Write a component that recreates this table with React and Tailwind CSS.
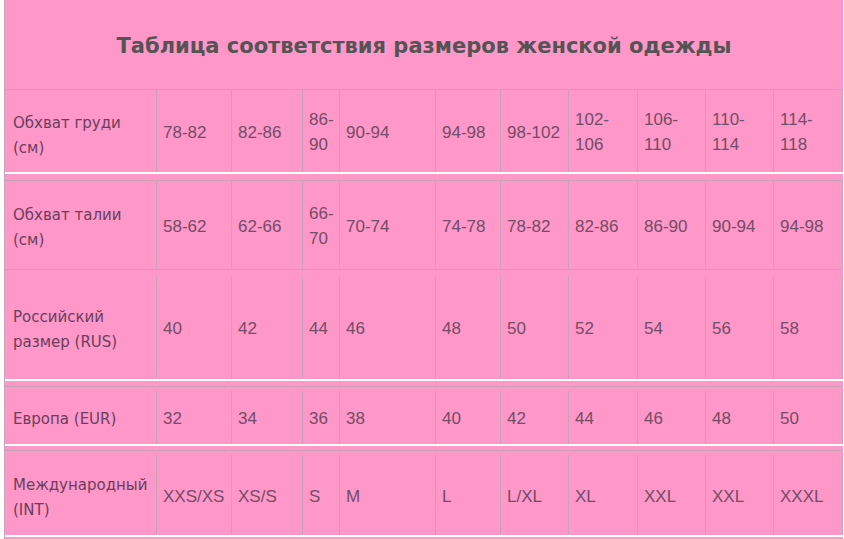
const COLS = 'grid-cols-[152px_75px_71px_37px_96px_65px_68px_69px_68px_68px_69px]'

const ROWS = [
  {
    label: ['Обхват груди', '(см)'],
    values: ['78-82', '82-86', '86-\n90', '90-94', '94-98', '98-102', '102-\n106', '106-\n110', '110-\n114', '114-\n118'],
    cls: 'h-[84px] border-b-2 border-white',
    labelPad: 'pt-[10px]',
  },
  {
    label: ['Обхват талии', '(см)'],
    values: ['58-62', '62-66', '66-\n70', '70-74', '74-78', '78-82', '82-86', '86-90', '90-94', '94-98'],
    cls: 'mt-[6px] h-[90px] border-y border-[#c7a3b7]',
    labelPad: 'pt-[5px]',
  },
  {
    label: ['Российский', 'размер (RUS)'],
    values: ['40', '42', '44', '46', '48', '50', '52', '54', '56', '58'],
    cls: 'h-[111px] border-b-2 border-white pt-[6px]',
    labelPad: 'pt-[4px]',
  },
  {
    label: ['Европа (EUR)'],
    values: ['32', '34', '36', '38', '40', '42', '44', '46', '48', '50'],
    cls: 'mt-[5px] h-[60px] border-t border-[#c7a3b7] border-b-2 border-b-white pt-[4px]',
    labelPad: 'pt-[3px]',
  },
  {
    label: ['Международный', '(INT)'],
    values: ['XXS/XS', 'XS/S', 'S', 'M', 'L', 'L/XL', 'XL', 'XXL', 'XXL', 'XXXL'],
    cls: 'mt-[4px] h-[87px] border-t border-[#c7a3b7] border-b-2 border-b-white pt-[4px]',
    labelPad: 'pt-[6px]',
  },
]

function Row({ row }) {
  return (
    <div className={`grid ${COLS} ${row.cls}`}>
      <div
        className={`flex flex-col justify-center border-r border-[#c7a3b7] pl-[8px] ${row.labelPad} font-['DejaVu_Sans',sans-serif] text-[15px] leading-[25px] text-[#683f5d]`}
      >
        {row.label.map((l) => (
          <span key={l} className="whitespace-nowrap">{l}</span>
        ))}
      </div>
      {row.values.map((v, i) => (
        <div
          key={i}
          className="flex items-center border-r border-[#c7a3b7] pl-[6px] pt-[2px] font-['Liberation_Sans',Arial,sans-serif] text-[17px] leading-[25px] text-[#724d67]"
        >
          <span className="whitespace-pre">{v}</span>
        </div>
      ))}
    </div>
  )
}

export default function App() {
  return (
    <div className="h-[539px] w-[844px] overflow-hidden bg-white pl-[4px]">
      <div className="h-full w-[839px] border-l border-[#c7a3b7] bg-[#ff97c9]">
        <div className="flex h-[90px] items-center justify-center border-b border-[#c7a3b7] pt-[4px]">
          <h1 className="font-['DejaVu_Sans',sans-serif] text-[21px] font-bold text-[#545454]">
            Таблица соответствия размеров женской одежды
          </h1>
        </div>
        {ROWS.map((row, i) => (
          <Row key={i} row={row} />
        ))}
      </div>
    </div>
  )
}
